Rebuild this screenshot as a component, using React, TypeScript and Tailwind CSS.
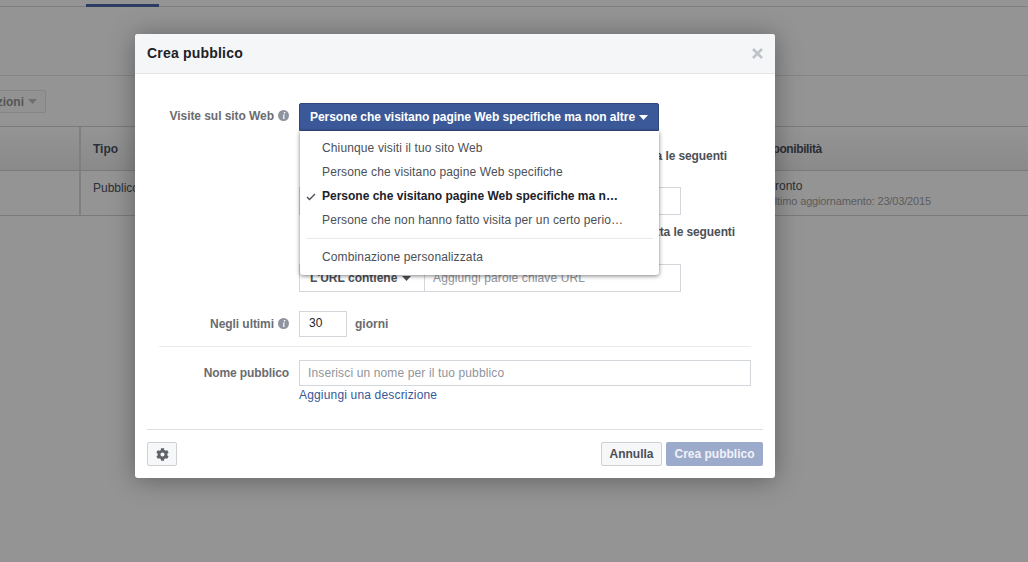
import { FaCog } from "react-icons/fa";

const InfoIcon = () => (
  <svg width="11" height="11" viewBox="0 0 11 11" className="shrink-0">
    <circle cx="5.5" cy="5.5" r="5.5" fill="#8d949e" />
    <path d="M6 2h1.4l-.3 1.4H5.7zM5.3 4.6h1.5l-.7 3.2h.7l-.2.9H4.8l.7-3.2h-.5z" fill="#fff" />
  </svg>
);

const Caret = ({ color }: { color: string }) => (
  <svg width="9" height="5" viewBox="0 0 9 5" className="shrink-0">
    <path d="M0 0h9L4.5 5z" fill={color} />
  </svg>
);

const menuItems = [
  { label: "Chiunque visiti il tuo sito Web" },
  { label: "Persone che visitano pagine Web specifiche" },
  { label: "Persone che visitano pagine Web specifiche ma non altre", selected: true },
  { label: "Persone che non hanno fatto visita per un certo periodo di tempo" },
];

const Background = () => (
  <div className="h-full text-[12px] text-[#2b2f38]">
    <div className="h-[7px] border-b border-[#7f7f7f] pt-[4px]">
      <div className="ml-[86px] h-[3px] w-[73px] bg-[#2c3d63]" />
    </div>
    <div className="h-[69px] border-b border-[#858585]" />
    <div className="flex h-[50px] items-start pt-[14px]">
      <div className="-ml-[30px] flex h-[23px] w-[76px] items-center justify-end gap-[4px] rounded-[2px] border border-[#858585] bg-[#929292] pr-[8px] text-[#565656]">
        <span className="font-bold">zioni</span>
        <Caret color="#6f6f6f" />
      </div>
    </div>
    <div className="flex h-[45px] border-y border-[#7a7a7a] bg-gradient-to-b from-[#949494] to-[#8a8a8a] font-bold">
      <div className="w-[81px] border-r-2 border-[#7f7f7f]" />
      <div className="flex flex-1 items-center pl-[12px]">Tipo</div>
      <div className="flex w-[273px] items-center tracking-[-0.4px]">Disponibilità</div>
    </div>
    <div className="flex h-[45px] border-b border-[#7a7a7a]">
      <div className="w-[81px] border-r-2 border-[#7f7f7f]" />
      <div className="flex-1 pl-[12px] pt-[8px]">Pubblico</div>
      <div className="w-[261px] pt-[8px] leading-[15px]">
        <div>Pronto</div>
        <div className="text-[11px] tracking-[-0.15px] text-[#5c5c5c]">Ultimo aggiornamento: 23/03/2015</div>
      </div>
    </div>
  </div>
);

const Dropdown = () => (
  <div className="absolute left-[165px] top-[97px] w-[359px] rounded-b-[3px] bg-white pb-[6px] pt-[5px] text-[12px] tracking-[0.13px] text-[#4b4f56] shadow-[0_1px_4px_rgba(0,0,0,0.5)]">
    {menuItems.map((item) => (
      <div
        key={item.label}
        className={`relative flex h-[24px] items-center pl-[22px] ${item.selected ? "pr-[38px]" : "pr-[32px]"}`}
      >
        {item.selected && (
          <svg width="10" height="8" viewBox="0 0 10 8" className="absolute left-[6px] top-[9px]">
            <path d="M1 4l2.5 2.5L9 1" fill="none" stroke="#4b4f56" strokeWidth="1.4" />
          </svg>
        )}
        <span className={`truncate ${item.selected ? "font-bold tracking-normal text-[#1d2129]" : ""}`}>{item.label}</span>
      </div>
    ))}
    <div className="mx-[6px] my-[6px] border-t border-[#e9ebee]" />
    <div className="flex h-[24px] items-center pl-[22px]">Combinazione personalizzata</div>
  </div>
);

const Modal = () => (
  <div className="absolute left-[135px] top-[34px] h-[444px] w-[640px] rounded-[3px] bg-white text-[12px] text-[#4b4f56] shadow-[0_2px_26px_rgba(0,0,0,0.35)]">
    <div className="flex h-[40px] items-center justify-between rounded-t-[3px] border-b border-[#e5e5e5] bg-[#f5f6f7] pl-[12px] pr-[12px]">
      <span className="text-[14px] font-bold tracking-[0.2px] text-[#1d2129]">Crea pubblico</span>
      <svg width="11" height="11" viewBox="0 0 11 11">
        <path d="M1 1l9 9M10 1l-9 9" stroke="#bec2c9" strokeWidth="2.6" />
      </svg>
    </div>

    <div className="pl-[12px] pr-[12px] pt-[29px]">
      <div className="flex items-start">
        <div className="flex h-[25px] w-[142px] items-center justify-end gap-[4px] font-bold tracking-[-0.06px] text-[#6a6c70]">
          Visite sul sito Web <InfoIcon />
        </div>
        <div className="ml-[10px] flex h-[28px] w-[360px] items-center gap-[4px] rounded-t-[2px] border border-[#2f477a] bg-[#3b5998] pl-[10px] font-bold tracking-[-0.04px] text-white">
          Persone che visitano pagine Web specifiche ma non altre
          <Caret color="#fff" />
        </div>
      </div>

      <div className="ml-[152px] mt-[16px] flex h-[18px] w-[428px] items-center justify-end font-bold tracking-[-0.1px] text-[#4b4f56]">
        Includi le persone che visitano una pagina che soddisfa le seguenti
      </div>
      <div className="ml-[152px] mt-[22px] h-[28px] w-[382px] border border-[#d3d6db]" />
      <div className="ml-[152px] mt-[8px] flex h-[18px] w-[436px] items-center justify-end font-bold tracking-[-0.1px]">
        Escludi le persone che visitano una pagina che rispetta le seguenti
      </div>
      <div className="ml-[152px] mt-[23px] flex h-[28px] w-[382px] items-center border border-[#d3d6db]">
        <div className="flex h-full w-[125px] items-center gap-[5px] border-r border-[#d3d6db] pl-[10px] font-bold">
          L'URL contiene <Caret color="#4b4f56" />
        </div>
        <span className="pl-[8px] tracking-[0.13px] text-[#90949c]">Aggiungi parole chiave URL</span>
      </div>

      <div className="mt-[19px] flex items-center">
        <div className="flex w-[142px] items-center justify-end gap-[4px] pb-[1px] font-bold tracking-[-0.06px] text-[#6a6c70]">
          Negli ultimi <InfoIcon />
        </div>
        <div className="ml-[10px] flex h-[26px] w-[48px] items-center border border-[#d3d6db] pb-[2px] pl-[9px] text-[#1d2129]">30</div>
        <span className="ml-[8px] font-bold text-[#6a6c70]">giorni</span>
      </div>

      <div className="mx-[12px] mt-[9px] border-t border-[#e9ebee]" />

      <div className="mt-[13px] flex items-center">
        <div className="w-[142px] pb-[1px] text-right font-bold tracking-[-0.1px] text-[#6a6c70]">Nome pubblico</div>
        <div className="ml-[10px] flex h-[26px] w-[452px] items-center border border-[#d3d6db] pb-[1px] pl-[8px] tracking-[0.13px] text-[#90949c]">
          Inserisci un nome per il tuo pubblico
        </div>
      </div>
      <div className="ml-[152px] tracking-[0.17px] text-[#365899]">Aggiungi una descrizione</div>

      <div className="mt-[25px] border-t border-[#dddfe2]" />

      <div className="mt-[12px] flex items-center justify-between">
        <button className="flex h-[24px] w-[30px] items-center justify-center rounded-[2px] border border-[#ced0d4] bg-[#f6f7f9]">
          <FaCog className="text-[13px] text-[#5f6368]" />
        </button>
        <div className="flex gap-[4px] font-bold">
          <button className="h-[24px] w-[61px] rounded-[2px] border border-[#ced0d4] bg-[#f6f7f9] text-[#4b4f56]">Annulla</button>
          <button className="h-[24px] w-[97px] rounded-[2px] bg-[#9cabcc] text-[#f0f2f7]">Crea pubblico</button>
        </div>
      </div>
    </div>

    <Dropdown />
  </div>
);

export default function App() {
  return (
    <div className="relative h-[562px] w-[1028px] overflow-hidden bg-[#949494] font-['Liberation_Sans',Arial,sans-serif]">
      <Background />
      <Modal />
    </div>
  );
}
